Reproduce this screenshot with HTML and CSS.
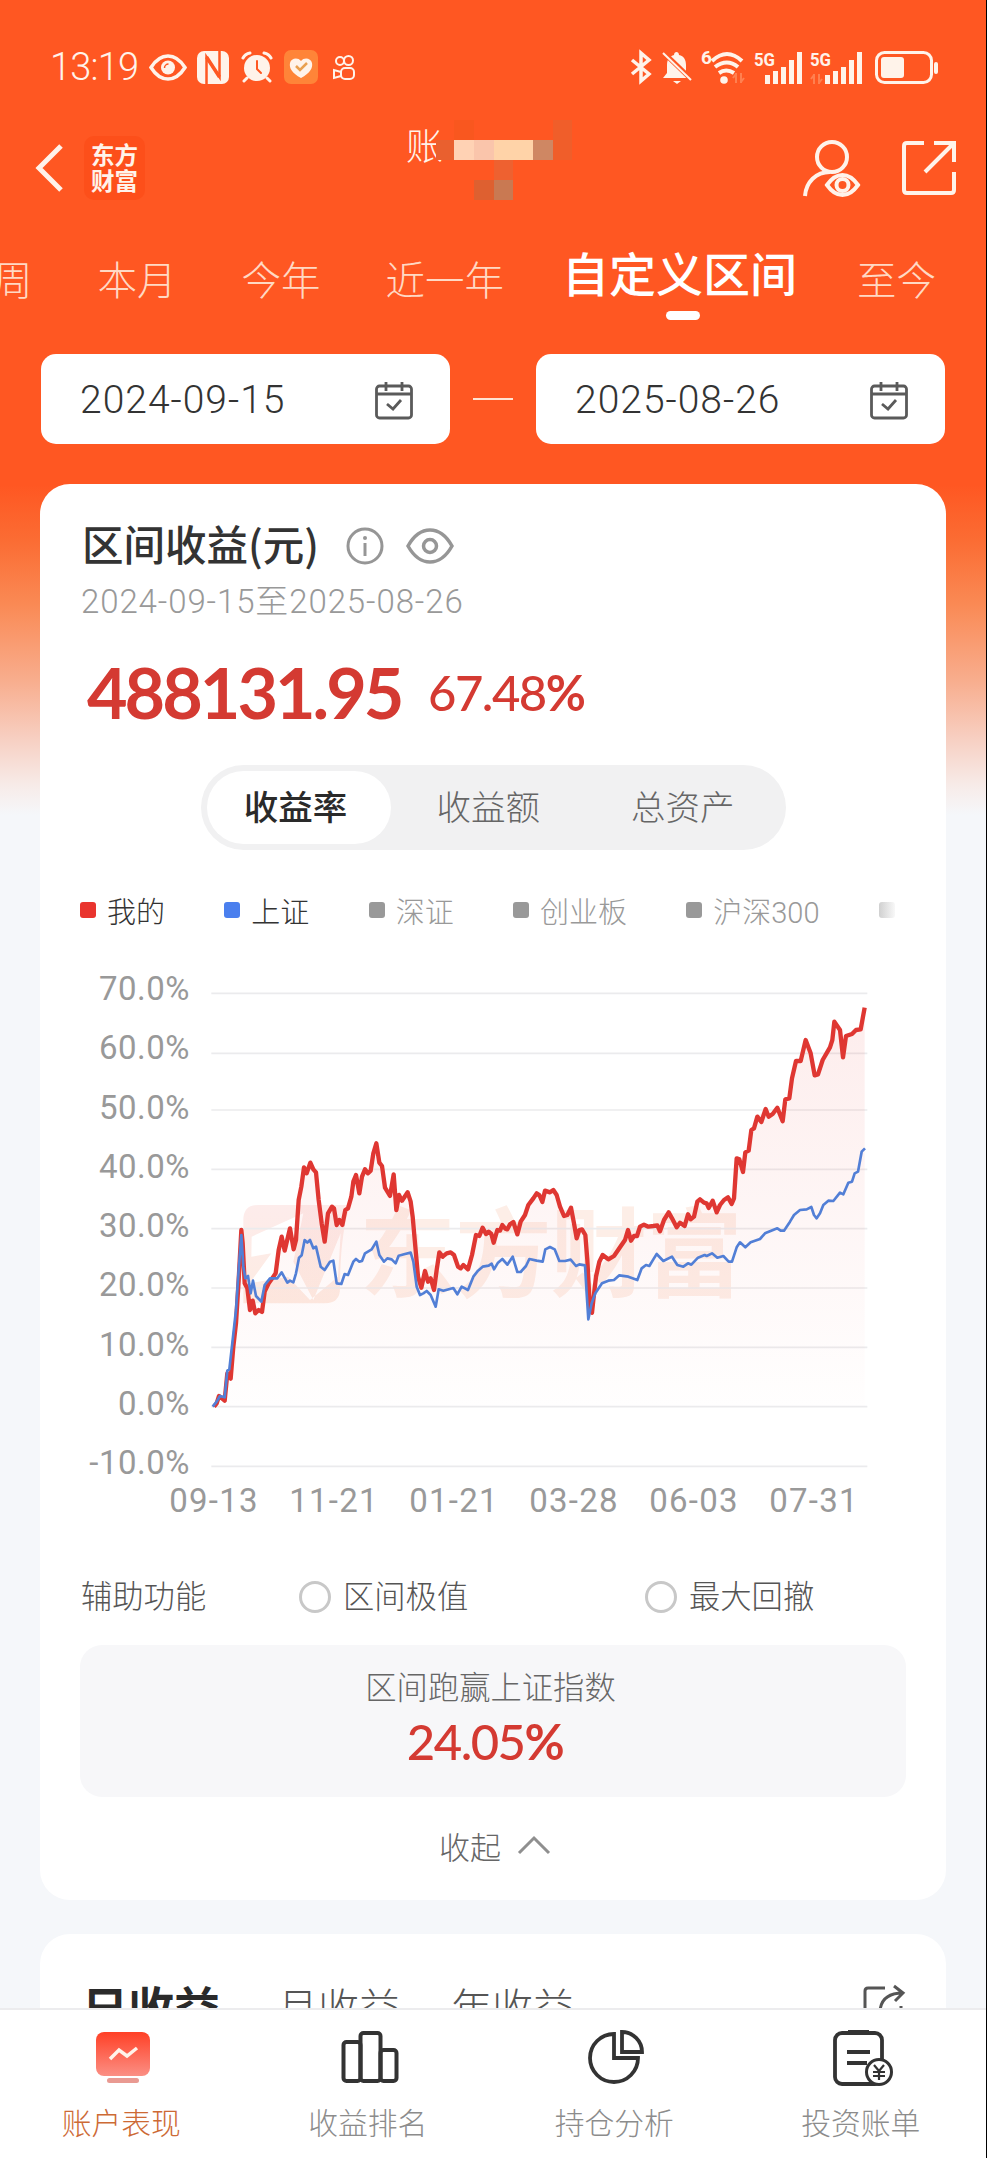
FILE: index.html
```html
<!DOCTYPE html>
<html lang="zh-CN">
<head>
    <meta charset="UTF-8">
    <meta name="viewport" content="width=device-width, initial-scale=1.0">
    <title>账户表现</title>
    <link rel="stylesheet" href="styles.css">
</head>
<body>
    <div class="phone">
        <div class="screen">
            <!-- Status bar -->
            <div class="status-bar">
                <span class="clock">13:19</span>
                <svg class="st-eye" width="38" height="27" viewBox="0 0 38 27" fill="none" stroke="#fff3ea" stroke-width="3.5">
                    <path d="M2 13.5C7 5.500 13 2 19 2s12 3.500 17 11.500C31 21.500 25 25 19 25S7 21.500 2 13.500z"/>
                    <circle cx="19" cy="13.500" r="7" fill="#fff3ea" stroke="none"/>
                    <path d="M15.500 14a4 4 0 0 1 4-4" stroke="#ff5722" stroke-width="1.500"/>
                </svg>
                <svg class="st-nfc" width="32" height="33" viewBox="0 0 32 33">
                    <rect width="32" height="33" rx="7" fill="#fff3ea"/>
                    <path d="M9.500 33V6l13 20V0" fill="none" stroke="#ff5722" stroke-width="2.500"/>
                    <path d="M9.500 6l13 20" fill="none" stroke="#ff5722" stroke-width="3.500"/>
                </svg>
                <svg class="st-alarm" width="32" height="32" viewBox="0 0 32 32" fill="none" stroke="#fff3ea" stroke-width="3" stroke-linecap="round">
                    <circle cx="16" cy="17" r="13" fill="#fff3ea" stroke="none"/>
                    <path d="M2 7q2-4 7-5M30 7q-2-4-7-5M6 27l-3 3M26 27l3 3"/>
                    <path d="M16 10v8l4 4" stroke="#ff5722" stroke-width="2"/>
                </svg>
                <svg class="st-heart" width="34" height="34" viewBox="0 0 34 34">
                    <rect width="34" height="34" rx="7" fill="#ff8438"/>
                    <path d="M17 28C8 23 5 18 6 13c1-5 8-6 11-2 3-4 10-3 11 2 1 5-2 10-11 15z" fill="#fff3ea"/>
                    <path d="M12 16l4 4 7-7" fill="none" stroke="#e9a050" stroke-width="2.500"/>
                </svg>
                <svg class="st-video" width="22" height="25" viewBox="0 0 22 25" fill="none" stroke="#fff3ea" stroke-width="2">
                    <circle cx="7" cy="6" r="4"/>
                    <circle cx="15.500" cy="5.500" r="4.500"/>
                    <rect x="8" y="13" width="13" height="11" rx="4"/>
                    <path d="M8 17l-7-2v8l7-2"/>
                </svg>
                <div class="status-right">
                    <svg class="st-bt" width="20" height="32" viewBox="0 0 20 32" fill="none" stroke="#fff3ea" stroke-width="3.5">
                        <path d="M1 9l17 14-8 7V2l8 7L1 23"/>
                    </svg>
                    <svg class="st-bell" width="30" height="33" viewBox="0 0 30 33">
                        <path d="M1 27l4-5V14c0-6 3-9 7-10 0-4 5-4 5 0 5 1 7 5 7 10v8l4 5z" fill="#fff3ea"/>
                        <path d="M11 30h8l-4 3z" fill="#fff3ea"/>
                        <path d="M1 1l29 28" stroke="#ff5722" stroke-width="5"/>
                        <path d="M1 2l28 27" stroke="#fff3ea" stroke-width="2"/>
                    </svg>
                    <svg class="st-wifi" width="44" height="34" viewBox="0 0 44 34" fill="none" stroke="#fff3ea" stroke-width="4">
                        <path d="M11 11q15-14 30 0M14 17q12-9 23 0M18 23q7-5 15 0"/>
                        <circle cx="23" cy="30" r="3.800" fill="#fff3ea" stroke="none"/>
                        <path d="M35 23v10M32 28l3-4M40 23v10M43 28l-3 4" stroke="#ff8050" stroke-width="2"/>
                        <text x="0" y="14" class="st-text">6</text>
                    </svg>
                    <svg class="st-5g" width="49" height="33" viewBox="0 0 49 33" fill="#fff3ea">
                        <text x="0" y="15" class="st-text" textLength="21" lengthAdjust="spacingAndGlyphs">5G</text>
                        <path d="M11 24h5v9h-5zM19 20h5v13h-5zM27 16h5v17h-5zM35 9h5v24h-5zM43 1h5v32h-5z"/>
                    </svg>
                    <svg class="st-5g second" width="53" height="33" viewBox="0 0 53 33" fill="#fff3ea">
                        <text x="0" y="15" class="st-text" textLength="21" lengthAdjust="spacingAndGlyphs">5G</text>
                        <path d="M15 24h5v9h-5zM23 20h5v13h-5zM31 16h5v17h-5zM39 9h5v24h-5zM47 1h5v32h-5z"/>
                        <path d="M4 23v10M1 28l3-4M9 23v10M12 28l-3 4" fill="none" stroke="#ff8050" stroke-width="2"/>
                    </svg>
                    <svg class="st-battery" width="64" height="33" viewBox="0 0 64 33">
                        <rect x="1.500" y="1.500" width="55" height="30" rx="8" fill="none" stroke="#fff3ea" stroke-width="3"/>
                        <rect x="6" y="6" width="23" height="21" rx="3" fill="#fff3ea"/>
                        <rect x="59" y="11" width="4" height="12" rx="2" fill="#fff3ea"/>
                    </svg>
                </div>
            </div>

            <!-- Header -->
            <div class="header">
                <svg class="back" width="28" height="48" viewBox="0 0 28 48" fill="none" stroke="#fff3ea" stroke-width="5">
                    <path d="M26 2L4 24l22 22"/>
                </svg>
                <div class="logo">东方<br>财富</div>
                <div class="title">
                    <span>账</span>
                    <svg width="136" height="80" viewBox="0 0 136 80" shape-rendering="crispEdges">
                        <rect x="0" y="20" width="18" height="20" fill="#e9602f"/>
                        <rect x="18" y="0" width="20" height="20" fill="#f9571f"/>
                        <rect x="18" y="20" width="20" height="20" fill="#ffd2b4"/>
                        <rect x="38" y="20" width="20" height="20" fill="#fac5ab"/>
                        <rect x="58" y="20" width="39" height="20" fill="#ffd3a8"/>
                        <rect x="97" y="20" width="20" height="20" fill="#cf8763"/>
                        <rect x="117" y="0" width="19" height="40" fill="#f05e2a"/>
                        <rect x="58" y="40" width="19" height="20" fill="#ee6130"/>
                        <rect x="38" y="60" width="20" height="20" fill="#de6030"/>
                        <rect x="58" y="60" width="19" height="20" fill="#c97952"/>
                    </svg>
                </div>
                <div class="header-actions">
                    <svg width="58" height="57" viewBox="0 0 58 57" fill="none" stroke="#fff3ea" stroke-width="4">
                        <circle cx="29" cy="17" r="15"/>
                        <path d="M2 56C3 42 13 32 27 32"/>
                        <path d="M24 45q7-10 15.500-10T55 45q-7 10-15.500 10T24 45z"/>
                        <circle cx="39.500" cy="45" r="6"/>
                    </svg>
                    <svg width="54" height="54" viewBox="0 0 54 54" fill="none" stroke="#fff3ea" stroke-width="4">
                        <path d="M22 2H5q-3 0-3 3v44q0 3 3 3h44q3 0 3-3V31"/>
                        <path d="M32 2h20v19M51 3L23 31"/>
                    </svg>
                </div>
            </div>

            <!-- Period tabs -->
            <div class="tabs">
                <span class="tab">周</span>
                <span class="tab">本月</span>
                <span class="tab">今年</span>
                <span class="tab">近一年</span>
                <span class="tab active">自定义区间</span>
                <span class="tab">至今</span>
            </div>

            <div class="date-range">
                <div class="date-box">
                    <span>2024-09-15</span>
                    <svg width="38" height="39" viewBox="0 0 38 39" fill="none" stroke="#5a5a5a" stroke-width="2.800">
                        <rect x="1.500" y="5" width="35" height="32" rx="3"/>
                        <path d="M2 13h34M11 1v9M27 1v9M12 23l6 5 8-9"/>
                    </svg>
                </div>
                <div class="dash"></div>
                <div class="date-box">
                    <span>2025-08-26</span>
                    <svg width="38" height="39" viewBox="0 0 38 39" fill="none" stroke="#5a5a5a" stroke-width="2.800">
                        <rect x="1.500" y="5" width="35" height="32" rx="3"/>
                        <path d="M2 13h34M11 1v9M27 1v9M12 23l6 5 8-9"/>
                    </svg>
                </div>
            </div>

            <!-- Profit card -->
            <div class="card">
                <div class="card-title">
                    <h2>区间收益(元)</h2>
                    <svg class="info" width="38" height="38" viewBox="0 0 38 38" fill="none" stroke="#969696" stroke-width="3">
                        <circle cx="19" cy="19" r="17"/>
                        <path d="M19 16v13"/>
                        <circle cx="19" cy="11" r="2" fill="#969696" stroke="none"/>
                    </svg>
                    <svg class="eye" width="48" height="36" viewBox="0 0 48 36" fill="none" stroke="#969696" stroke-width="3.5">
                        <path d="M2 18Q11 2 24 2t22 16Q37 34 24 34T2 18z"/>
                        <circle cx="24" cy="18" r="6.500"/>
                    </svg>
                </div>
                <p class="card-date">2024-09-15至2025-08-26</p>
                <div class="amount">
                    <span class="amount-value">488131.95</span>
                    <span class="amount-rate">67.48<b>%</b></span>
                </div>

                <div class="segment">
                    <span class="segment-item selected">收益率</span>
                    <span class="segment-item">收益额</span>
                    <span class="segment-item">总资产</span>
                </div>

                <div class="legend">
                    <span class="legend-item mine">我的</span>
                    <span class="legend-item sh">上证</span>
                    <span class="legend-item off">深证</span>
                    <span class="legend-item off">创业板</span>
                    <span class="legend-item off">沪深300</span>
                    <span class="legend-item more"></span>
                </div>

                <div class="chart">
                    <div class="y-axis">
                        <span>70.0%</span>
                        <span>60.0%</span>
                        <span>50.0%</span>
                        <span>40.0%</span>
                        <span>30.0%</span>
                        <span>20.0%</span>
                        <span>10.0%</span>
                        <span>0.0%</span>
                        <span>-10.0%</span>
                    </div>
                    <svg class="plot" width="700" height="520" viewBox="0 0 2100 1560">
                        <defs>
                            <linearGradient id="area" gradientUnits="userSpaceOnUse" x1="0" y1="140" x2="0" y2="1340">
                                <stop offset="0" stop-color="#e9342e" stop-opacity="0.09"/>
                                <stop offset="1" stop-color="#e9342e" stop-opacity="0.005"/>
                            </linearGradient>
                            <linearGradient id="mark" x1="0" y1="0" x2="0" y2="1">
                                <stop offset="0" stop-color="#fdeceb"/>
                                <stop offset="1" stop-color="#fdebe2"/>
                            </linearGradient>
                        </defs>
                        <!-- watermark -->
                        <path d="M205 735h275q-30 90-30 250q0 45-45 45H160V780q0-45 45-45z" fill="url(#mark)"/>
                        <path d="M185 830l155-70-30 145 60 115 82-200-8 130-84 70-66-70-115 20 65-90-60 10z" fill="#fff"/>
                        <text class="watermark" x="508" y="988" textLength="1150">东方财富</text>
                        <g stroke="#ebebed" stroke-width="5">
                            <path d="M64 100H2032M64 280H2032M64 450H2032M64 628H2032M64 806H2032M64 984H2032M64 1162H2032M64 1340H2032M64 1519H2032"/>
                        </g>
                        <path fill="url(#area)" d="M72 1340L87 1308 104 1322 112 1240 122 1256 138 1090 146 960 154 810 164 970 172 985 180 1050 188 1022 196 1060 216 1056 224 995 236 970 257 940 275 830 284 872 300 805 311 868 326 720 342 622 350 640 361 608 378 637 395 790 404 845 414 760 426 740 440 795 457 795 466 750 484 710 498 645 508 700 525 628 542 632 559 550 568 608 576 618 585 683 600 708 611 643 619 750 627 705 636 722 653 697 668 770 684 950 694 983 705 933 722 955 732 990 748 877 758 890 782 877 804 920 834 928 858 825 878 803 904 822 911 848 922 810 937 795 952 808 970 786 982 823 1005 765 1040 700 1057 726 1066 692 1090 690 1122 768 1143 743 1160 835 1176 808 1186 825 1200 1050 1206 1058 1218 950 1228 905 1255 898 1290 862 1314 810 1323 842 1350 800 1402 796 1410 814 1436 757 1460 802 1484 798 1494 763 1512 770 1530 718 1556 744 1568 722 1580 757 1614 712 1632 715 1640 595 1659 636 1666 577 1684 510 1702 470 1727 447 1736 470 1762 443 1778 484 1798 415 1818 303 1832 303 1847 240 1862 280 1874 346 1898 300 1920 262 1933 185 1950 210 1959 292 1968 228 2012 208 2024 143V1340z"/>
                        <polyline class="line-mine" points="72,1340 80,1330 87,1308 96,1315 104,1322 112,1240 122,1256 130,1160 138,1090 146,960 154,810 158,850 164,970 172,985 180,1050 188,1022 196,1060 206,1050 216,1056 224,995 236,970 250,950 257,940 266,870 275,830 284,872 300,805 311,868 318,840 326,720 334,680 342,622 350,640 361,608 370,628 378,637 386,720 395,790 404,845 414,760 426,740 432,745 440,795 448,780 457,795 466,750 474,745 484,710 490,665 498,645 508,700 516,650 525,628 534,640 542,632 550,580 559,550 568,608 576,618 585,683 600,708 611,643 619,750 627,705 636,722 653,697 662,725 668,770 676,860 684,950 694,983 705,933 714,965 722,955 732,990 740,930 748,877 758,890 770,880 782,877 792,885 804,920 812,925 820,915 834,928 846,885 858,825 868,828 878,803 888,822 896,815 904,822 911,848 922,810 930,812 937,795 946,806 952,808 960,793 970,786 982,823 992,785 1005,765 1015,735 1030,715 1040,700 1048,705 1057,726 1065,692 1080,697 1090,690 1100,705 1110,740 1122,768 1132,765 1143,743 1152,790 1160,835 1168,810 1176,808 1186,825 1192,900 1200,1050 1206,1058 1210,1020 1218,950 1228,905 1238,885 1255,898 1272,888 1290,862 1305,840 1314,810 1323,842 1332,828 1341,828 1350,800 1362,794 1375,800 1390,798 1402,796 1410,814 1422,780 1436,757 1446,775 1460,802 1470,788 1484,798 1494,763 1502,778 1512,770 1522,725 1530,718 1542,728 1550,730 1556,744 1568,722 1580,757 1590,735 1602,720 1614,712 1625,732 1632,715 1640,595 1648,598 1659,636 1666,577 1676,572 1684,510 1692,505 1702,470 1714,486 1727,447 1736,470 1748,462 1762,443 1778,484 1786,418 1798,415 1806,355 1818,303 1832,303 1847,240 1862,280 1874,346 1884,343 1898,300 1920,262 1927,240 1933,185 1950,210 1959,292 1968,228 1986,222 1998,210 2012,208 2024,143"/>
                        <polyline class="line-sh" points="68,1340 80,1325 90,1308 104,1312 112,1232 118,1228 128,1140 138,1050 146,930 154,825 160,920 166,955 174,948 182,1000 189,962 198,1008 214,1025 224,975 240,955 262,955 275,937 292,968 300,962 310,967 318,940 327,893 335,886 344,840 352,848 360,840 370,865 378,860 392,920 404,930 420,905 430,902 440,970 454,972 464,942 474,945 490,905 498,897 508,905 516,903 525,880 545,868 559,845 568,885 582,905 592,895 605,898 617,910 626,887 645,882 662,878 670,905 680,980 690,1005 700,1000 710,993 722,1005 737,1040 746,988 760,992 790,984 802,1003 815,980 834,990 850,950 864,932 878,920 896,917 905,911 912,928 924,908 937,897 952,914 968,890 982,936 992,936 1008,918 1018,897 1040,902 1058,905 1066,868 1080,861 1094,868 1108,903 1125,903 1142,899 1158,918 1168,913 1185,916 1190,1000 1195,1078 1205,1030 1216,1000 1236,970 1255,962 1272,960 1288,946 1315,950 1342,960 1355,925 1368,915 1378,918 1390,898 1400,882 1420,903 1446,890 1462,915 1480,920 1494,910 1504,914 1524,893 1544,885 1550,888 1566,880 1582,893 1600,888 1616,905 1626,905 1640,862 1650,847 1666,862 1682,847 1710,837 1725,820 1762,805 1772,812 1782,812 1800,785 1812,765 1830,750 1850,748 1864,741 1872,765 1880,775 1890,760 1900,735 1915,722 1930,723 1950,698 1960,703 1975,668 1986,665 1994,640 2004,635 2015,575 2025,565"/>
                    </svg>
                </div>
                <div class="x-axis">
                    <span>09-13</span>
                    <span>11-21</span>
                    <span>01-21</span>
                    <span>03-28</span>
                    <span>06-03</span>
                    <span>07-31</span>
                </div>

                <div class="options">
                    <span class="options-label">辅助功能</span>
                    <label class="option"><i></i><span>区间极值</span></label>
                    <label class="option drawdown"><i></i><span>最大回撤</span></label>
                </div>

                <div class="beat">
                    <p>区间跑赢上证指数</p>
                    <div class="beat-rate">24.05<b>%</b></div>
                </div>

                <div class="collapse">
                    <span>收起</span>
                    <svg width="32" height="18" viewBox="0 0 32 18" fill="none" stroke="#8f8f8f" stroke-width="3">
                        <path d="M1 17L16 2l15 15"/>
                    </svg>
                </div>
            </div>

            <!-- Daily / monthly / yearly profit -->
            <div class="card calendar-card">
                <span class="cal-tab current">日收益</span>
                <span class="cal-tab">月收益</span>
                <span class="cal-tab">年收益</span>
                <svg class="cal-share" width="42" height="42" viewBox="0 0 42 42" fill="none" stroke="#555" stroke-width="3">
                    <path d="M22 3H5Q2 3 2 6v30q0 3 3 3h30q3 0 3-3V21"/>
                    <path d="M17 26C18 14 26 8 40 8M31 1l9 7-8 8"/>
                </svg>
            </div>
        </div>

        <!-- Bottom navigation -->
        <div class="nav">
            <a class="nav-item on">
                <svg width="58" height="56" viewBox="0 0 58 56">
                    <defs>
                        <linearGradient id="screen" x1="0" y1="0" x2="0" y2="1">
                            <stop offset="0" stop-color="#ff4026"/>
                            <stop offset="1" stop-color="#fb8f84"/>
                        </linearGradient>
                    </defs>
                    <rect x="2" y="2" width="54" height="44" rx="8" fill="url(#screen)"/>
                    <rect x="13" y="48" width="32" height="5" rx="2.500" fill="#e99a92"/>
                    <path d="M16 29l9-9 8 6 10-8" fill="none" stroke="#fff3ea" stroke-width="3.500"/>
                </svg>
                <span>账户表现</span>
            </a>
            <a class="nav-item">
                <svg width="58" height="56" viewBox="0 0 58 56" fill="none" stroke="#333" stroke-width="4">
                    <rect x="2.500" y="12" width="17" height="39" rx="3"/>
                    <rect x="19.500" y="3" width="20" height="48" rx="3"/>
                    <rect x="39.500" y="20" width="16" height="31" rx="3"/>
                </svg>
                <span>收益排名</span>
            </a>
            <a class="nav-item">
                <svg width="58" height="56" viewBox="0 0 58 56" fill="none" stroke="#333" stroke-width="3.800">
                    <path d="M27 4A24 24 0 1 0 51 28H27z"/>
                    <path d="M35 2v20h20A20 20 0 0 0 35 2z"/>
                </svg>
                <span>持仓分析</span>
            </a>
            <a class="nav-item">
                <svg width="60" height="56" viewBox="0 0 60 56" fill="none" stroke="#333" stroke-width="3.800">
                    <rect x="2" y="3" width="47" height="51" rx="7"/>
                    <path d="M15 2.500h21" stroke-width="5"/>
                    <path d="M14 22h23M14 33h20"/>
                    <circle cx="46" cy="42" r="12.500" fill="#fff" stroke-width="3"/>
                    <path d="M41 35l5 6 5-6M46 41v9M40 42h12M40 46h12" stroke-width="2.200"/>
                </svg>
                <span>投资账单</span>
            </a>
        </div>
    </div>
</body>
</html>
```
FILE: styles.css
```css
* {
    box-sizing: border-box;
    margin: 0;
    padding: 0;
}

body {
    font-family: Roboto, "Noto Sans CJK SC", sans-serif;
    font-weight: 300;
    color: #333;
}

svg {
    display: block;
    flex: none;
    overflow: visible;
}

.phone {
    width: 987px;
    height: 2158px;
    border-right: 1px solid #000;
    overflow: hidden;
}

.screen {
    height: 2008px;
    overflow: hidden;
    background: linear-gradient(#ff5722 0, #ff5722 485px, #fb6c33 540px, #fa8a55 605px, #f8ad8d 680px, #f7d0c3 740px, #f7ebe8 785px, #f5f7fa 815px);
}

/* Status bar */
.status-bar {
    display: flex;
    align-items: center;
    height: 94px;
    padding: 40px 47px 0 50px;
}

.clock {
    width: 99px;
    font-size: 38px;
    letter-spacing: -0.8px;
    color: #fff3ea;
}

.st-nfc {
    margin-left: 10px;
}

.st-alarm {
    margin-left: 12px;
}

.st-heart {
    margin-left: 11px;
}

.st-video {
    margin-left: 15px;
}

.status-right {
    display: flex;
    align-items: center;
    margin-left: auto;
}

.st-bell {
    margin-left: 11px;
}

.st-wifi,
.st-5g {
    margin-left: 9px;
}

.st-5g.second {
    margin-left: 7px;
}

.st-battery {
    margin-left: 12px;
}

.st-text {
    font-size: 19px;
    font-weight: 700;
    fill: #fff3ea;
    stroke: none;
}

/* Header */
.header {
    display: flex;
    align-items: center;
    height: 148px;
    padding: 0 30px 0 35px;
}

.logo {
    width: 61px;
    height: 64px;
    margin-left: 21px;
    padding-top: 5px;
    border-radius: 10px;
    background: #fd4f1a;
    color: #fff3ea;
    font-family: "Noto Sans CJK SC", sans-serif;
    font-size: 23.5px;
    font-weight: 700;
    line-height: 26px;
    text-align: center;
}

.title {
    display: flex;
    margin-left: 261px;
    margin-top: -16px;
    color: #fff3ea;
    font-size: 37px;
    line-height: 64px;
}

.title svg {
    margin: 4px 0 4px -7px;
}

.header-actions {
    display: flex;
    align-items: center;
    gap: 41px;
    margin-left: auto;
}

/* Period tabs */
.tabs {
    display: flex;
    align-items: center;
    height: 70px;
    margin-bottom: 42px;
    margin-left: -7px;
    white-space: nowrap;
}

.tab {
    margin-right: 65px;
    font-size: 39.5px;
    color: #ffd9c4;
}

.tab:nth-child(4) {
    margin-right: 58px;
}

.tab.active {
    position: relative;
    top: -6px;
    margin-right: 60px;
    font-size: 47px;
    font-weight: 500;
    color: #fff;
}

.tab.active::after {
    content: "";
    position: absolute;
    left: 50%;
    bottom: -14px;
    width: 34px;
    height: 9px;
    margin-left: -14px;
    border-radius: 5px;
    background: #fff;
}

.date-range {
    display: flex;
    align-items: center;
    padding: 0 41px;
}

.date-box {
    display: flex;
    flex: 1;
    align-items: center;
    justify-content: space-between;
    height: 90px;
    padding: 2px 37px 0 39px;
    border-radius: 15px;
    background: #fff;
    font-size: 39px;
    letter-spacing: 1px;
}

.dash {
    width: 40px;
    height: 2px;
    margin: 0 23px;
    background: #ffe3d3;
}

/* Profit card */
.card {
    width: 906px;
    margin: 40px 0 0 40px;
    padding: 37px 41px 28px;
    border-radius: 30px;
    background: #fff;
}

.card-title {
    display: flex;
    align-items: center;
    height: 50px;
}

.card-title h2 {
    width: 265px;
    margin-top: -6px;
    padding-left: 1px;
    font-family: "Noto Sans CJK SC", sans-serif;
    font-size: 41.5px;
    font-weight: 500;
    line-height: 50px;
    white-space: nowrap;
}

.card-title .eye {
    margin-left: 22px;
}

.card-date {
    height: 60px;
    font-size: 33px;
    line-height: 61px;
    letter-spacing: 0.9px;
    color: #999;
}

.amount {
    display: flex;
    align-items: center;
    height: 122px;
    padding-left: 6px;
    font-family: Lato, sans-serif;
    font-weight: 500;
    color: #d43a32;
}

.amount-value {
    width: 341px;
    font-size: 70px;
    font-weight: 700;
    letter-spacing: -3px;
}

.amount-rate {
    font-size: 49px;
    letter-spacing: -1.5px;
}

.segment {
    display: flex;
    width: 585px;
    height: 85px;
    margin: 12px 0 0 120px;
    padding: 6px;
    border-radius: 43px;
    background: #f1f1f2;
}

.segment-item {
    flex: 1;
    border-radius: 37px;
    font-size: 34.5px;
    line-height: 74px;
    text-align: center;
    color: #666;
}

.segment-item.selected {
    flex: 0 0 184px;
    padding-right: 7px;
    background: #fff;
    font-weight: 500;
    color: #2a2a2a;
}

.legend {
    display: flex;
    align-items: center;
    height: 40px;
    margin-top: 40px;
    font-size: 29px;
}

.legend-item {
    display: flex;
    align-items: center;
    margin-right: 60.3px;
    margin-left: -1px;
    white-space: nowrap;
}

.legend-item::before {
    content: "";
    width: 16px;
    height: 16px;
    margin-right: 11px;
    border-radius: 3px;
    background: #999;
}

.legend-item.mine::before {
    background: #e9342e;
}

.legend-item.sh::before {
    background: #4a7fee;
}

.legend-item.off {
    color: #999;
}

.legend-item.more::before {
    background: linear-gradient(90deg, #d0d0d0, #f8f8f8);
}

/* Chart */
.chart {
    display: flex;
    height: 533px;
    margin-top: 29px;
}

.y-axis {
    flex: none;
    width: 109px;
    font-size: 33px;
    font-weight: 400;
    letter-spacing: 0.5px;
    text-align: right;
    color: #999;
}

.y-axis span {
    display: block;
    height: 59.25px;
    line-height: 60px;
}

.plot {
    margin-top: 1px;
}

.watermark {
    font-family: "Noto Sans CJK SC", sans-serif;
    font-size: 290px;
    font-weight: 700;
    fill: #fdeee7;
}

.line-mine,
.line-sh {
    fill: none;
    stroke: #df3732;
    stroke-width: 13;
    stroke-linejoin: round;
}

.line-sh {
    stroke: #527fd6;
    stroke-width: 8;
}

.x-axis {
    display: flex;
    height: 38px;
    margin-top: -10px;
    padding-left: 73px;
    font-size: 33px;
    font-weight: 400;
    line-height: 37px;
    letter-spacing: 1.2px;
    color: #999;
}

.x-axis span {
    flex: none;
    width: 120px;
    text-align: center;
}

.options {
    display: flex;
    align-items: center;
    height: 50px;
    margin-top: 52px;
    font-size: 31.3px;
    color: #555;
}

.options span {
    margin-top: -5px;
}

.options-label {
    width: 218px;
}

.option {
    display: flex;
    align-items: center;
    width: 346px;
}

.option.drawdown {
    width: auto;
}

.option i {
    width: 32px;
    height: 32px;
    margin-right: 12px;
    border: 3px solid #c8c8c8;
    border-radius: 50%;
}

.beat {
    width: 826px;
    height: 152px;
    margin: 23px 0 0 -1px;
    padding-top: 22px;
    border-radius: 22px;
    background: #f7f7f9;
    text-align: center;
}

.beat p {
    margin-right: 5px;
    font-size: 31.3px;
    line-height: 44px;
    color: #666;
}

.beat-rate {
    margin-right: 16px;
    font-family: Lato, sans-serif;
    font-size: 49px;
    font-weight: 500;
    line-height: 61px;
    letter-spacing: -1.5px;
    color: #d43a32;
}

.collapse {
    display: flex;
    align-items: center;
    justify-content: center;
    gap: 17px;
    height: 50px;
    margin-top: 23px;
    margin-bottom: 2px;
    padding-left: 3px;
    font-size: 31px;
    color: #666;
}

/* Daily profit card, cut off by the navigation */
.calendar-card {
    display: flex;
    align-items: center;
    height: 200px;
    margin-top: 34px;
    padding: 0 41px 56px 42px;
}

.cal-tab {
    margin-right: 51px;
    margin-top: -3px;
    font-size: 41px;
    color: #555;
}

.cal-tab.current {
    margin-right: 57px;
    font-size: 46px;
    font-weight: 700;
    color: #2a2a2a;
}

.cal-share {
    margin-left: auto;
}

/* Bottom navigation */
.nav {
    display: flex;
    height: 150px;
    border-top: 2px solid #ececee;
    background: #fff;
}

.nav-item {
    display: flex;
    flex: 1;
    flex-direction: column;
    align-items: center;
    padding-top: 20px;
    font-size: 29.8px;
    color: #8c8c8c;
}

.nav-item span {
    margin-top: 18px;
    margin-right: 4px;
    line-height: 40px;
}

.nav-item.on {
    color: #cd6a35;
}
```
